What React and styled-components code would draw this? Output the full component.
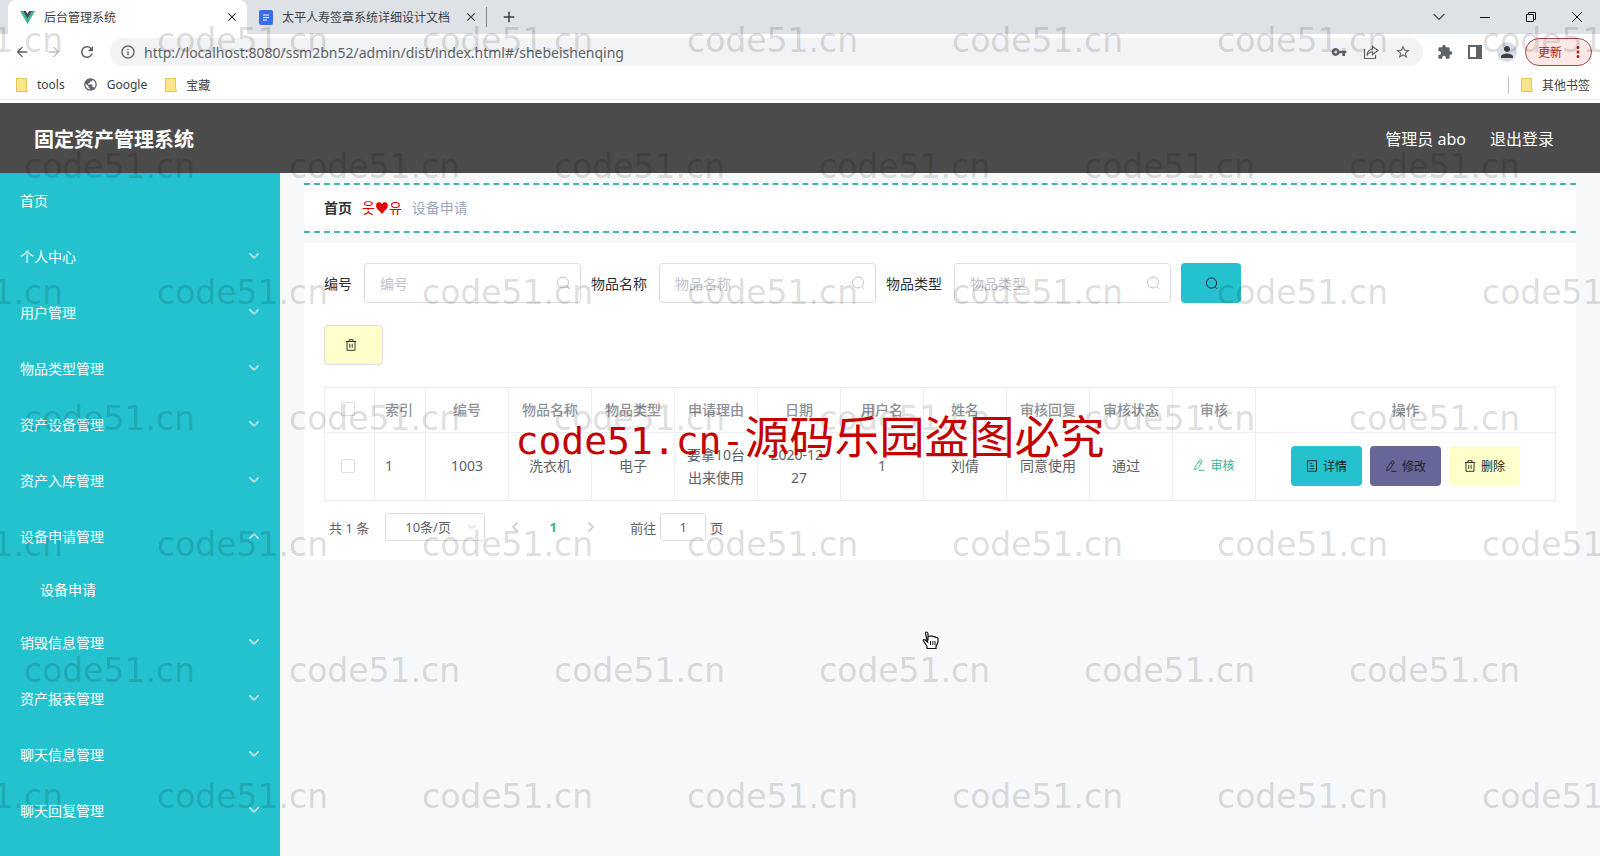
import { useState } from 'react';
import styled, { createGlobalStyle } from 'styled-components'
import { MdVpnKey, MdStarBorder, MdExtension, MdPerson, MdPublic, MdRefresh, MdInfoOutline, MdMoreVert, MdArrowBack, MdArrowForward, MdClose, MdAdd } from 'react-icons/md'

const colors = {
    primary: '#24c2ce',
    dash: '#42b9a8',
    purple: '#666699',
    yellow: '#ffffcc',
    green: '#36b38c',
    header: '#4b4b4b',
    page: '#f6f8fa',
    text: '#606266',
    border: '#dcdfe6',
    tableBorder: '#ebeef5',
    placeholder: '#c0c4cc',
    chrome: '#dee1e6',
}

const GlobalStyle = createGlobalStyle`
    *, *::before, *::after {
        box-sizing: border-box;
    }
    body {
        margin: 0;
        background: ${colors.page};
        color: ${colors.text};
        font-family: "Noto Sans", "Noto Sans CJK SC", sans-serif;
        font-size: 14px;
    }
    button, input, select {
        font-family: inherit;
    }
    button {
        padding: 0;
        border: 0;
        background: none;
        cursor: pointer;
    }
    a {
        color: inherit;
        text-decoration: none;
    }
    svg {
        display: block;
        flex: none;
    }
`

const Page = styled.div`
    position: relative;
    display: flex;
    flex-direction: column;
    min-height: 100vh;
    overflow: hidden;
`

/* browser frame */

const Browser = styled.div`
    background: #fff;
    padding-bottom: 3px;
    color: #3c4043;
    font-size: 12px;
`
const TabStrip = styled.div`
    display: flex;
    align-items: center;
    height: 34px;
    padding-left: 8px;
    background: ${colors.chrome};
`
const Tab = styled.div`
    display: flex;
    align-items: center;
    gap: 9px;
    width: 239px;
    height: 34px;
    padding: 0 8px 0 12px;
    border-radius: 8px 8px 0 0;
    background: ${(props) => (props.$active ? '#fff' : 'transparent')};
`
const TabTitle = styled.span`
    flex: 1;
    overflow: hidden;
    white-space: nowrap;
`
const IconButton = styled.button`
    display: grid;
    place-content: center;
    flex: none;
    color: ${(props) => props.$color || '#3c4043'};
`
const TabDivider = styled.div`
    width: 1px;
    height: 20px;
    margin-right: 13px;
    background: #80868b;
`
const WindowControls = styled.div`
    display: flex;
    gap: 32px;
    margin-left: auto;
    padding-right: 16px;
`
const Toolbar = styled.div`
    display: flex;
    align-items: center;
    gap: 14px;
    height: 34px;
    padding: 2px 8px 0 14px;
`
const NavButtons = styled.div`
    display: flex;
    gap: 16px;
`
const AddressBar = styled.div`
    display: flex;
    align-items: center;
    flex: 1;
    gap: 16px;
    height: 28px;
    padding: 0 12px 0 10px;
    border-radius: 14px;
    background: #f1f3f4;
    color: #5f6368;
`
const AddressLabel = styled.label`
    display: flex;
    align-items: center;
    flex: 1;
    gap: 8px;
`
const AddressInput = styled.input`
    flex: 1;
    padding: 0;
    border: 0;
    outline: 0;
    background: none;
    color: #5f6368;
    font-size: 14px;
`
const ProfileGroup = styled.div`
    display: flex;
    align-items: center;
    gap: 8px;
`
const Avatar = styled(IconButton)`
    width: 20px;
    height: 20px;
    border-radius: 50%;
    background: #d9dce6;
`
const UpdateButton = styled.button`
    display: flex;
    align-items: center;
    justify-content: space-between;
    width: 67px;
    height: 28px;
    padding: 0 4px 0 12px;
    border: 1px solid #a34a45;
    border-radius: 14px;
    background: #fce8e6;
    color: #b3261e;
    font-size: 12px;
`
const Bookmarks = styled.div`
    display: flex;
    align-items: center;
    gap: 18px;
    height: 32px;
    padding: 2px 10px 0 16px;
    border-bottom: 1px solid #eceef0;
`
const Bookmark = styled.a`
    display: flex;
    align-items: center;
    gap: 9px;
`
const OtherBookmarks = styled(Bookmark)`
    margin-left: auto;
    padding-left: 12px;
    border-left: 1px solid #c4c7cb;
`

/* admin page */

const Header = styled.header`
    display: flex;
    justify-content: space-between;
    align-items: center;
    height: 70px;
    padding: 0 46px 0 34px;
    background: ${colors.header};
    color: #fff;
`
const Title = styled.h1`
    margin: 0;
    font-size: 20px;
    font-weight: 700;
`
const UserInfo = styled.div`
    display: flex;
    gap: 24px;
    font-size: 16px;
`
const Body = styled.div`
    display: flex;
    flex: 1;
`
const Sidebar = styled.nav`
    flex: none;
    width: 280px;
    background: ${colors.primary};
    color: #fff;
`
const MenuItem = styled.button`
    display: flex;
    justify-content: space-between;
    align-items: center;
    width: 100%;
    height: ${(props) => (props.$sub ? '50px' : '56px')};
    padding: 0 20px 2px ${(props) => (props.$sub ? '40px' : '20px')};
    color: #fff;
    font-size: 14px;
`
const Main = styled.main`
    flex: 1;
    min-width: 0;
    padding: 10px 24px;
`
const Breadcrumb = styled.div`
    display: flex;
    align-items: center;
    gap: 10px;
    height: 50px;
    padding: 0 20px 2px;
    border-top: 2px dashed ${colors.dash};
    border-bottom: 2px dashed ${colors.dash};
    background: #fff;
    color: #97a8be;
`
const BreadcrumbHome = styled.a`
    color: #303133;
    font-weight: 700;
`
const BreadcrumbSeparator = styled.span`
    color: #e00000;
    font-family: "Noto Sans CJK KR", "DejaVu Sans", sans-serif;
`
const Card = styled.section`
    margin-top: 10px;
    padding: 20px 20px 19px;
    background: #fff;
`
const SearchForm = styled.form`
    display: flex;
    flex-wrap: wrap;
    gap: 10px;
    margin-bottom: 22px;
`
const Field = styled.label`
    display: flex;
    align-items: center;
    gap: 12px;
    color: #303133;
`
const InputBox = styled.span`
    display: flex;
    align-items: center;
    width: 217px;
    height: 40px;
    padding: 0 10px 0 15px;
    border: 1px solid ${colors.border};
    border-radius: 4px;
    color: ${colors.placeholder};
`
const SearchInput = styled.input`
    flex: 1;
    min-width: 0;
    padding: 0;
    border: 0;
    outline: 0;
    background: none;
    color: ${colors.text};
    font-size: 14px;
    &::placeholder {
        color: ${colors.placeholder};
    }
`
const Button = styled.button`
    display: inline-flex;
    align-items: center;
    justify-content: center;
    gap: 5px;
    width: ${(props) => props.$width || '71px'};
    height: 40px;
    border-radius: 4px;
    background: ${(props) => props.$color};
    color: #222;
    font-size: 12px;
`
const DeleteButton = styled(Button)`
    justify-content: flex-start;
    padding-left: 20px;
    border: 1px solid ${colors.border};
`
const Table = styled.table`
    width: 100%;
    margin-top: 22px;
    border: 1px solid ${colors.tableBorder};
    border-collapse: collapse;
    table-layout: fixed;
    th, td {
        padding: 0 10px 2px;
        border: 1px solid ${colors.tableBorder};
        line-height: 23px;
        text-align: center;
    }
    th {
        height: 45px;
        color: #909399;
        font-weight: 500;
    }
    td {
        height: 68px;
    }
    th.check, td.check {
        padding-right: 14px;
    }
    th.index, td.index {
        text-align: left;
    }
`
const Col = styled.col`
    width: ${(props) => props.$width};
`
const Checkbox = styled.input`
    display: block;
    width: 14px;
    height: 14px;
    margin: 0 auto;
    appearance: none;
    border: 1px solid ${colors.border};
    border-radius: 2px;
    background: #fff;
`
const Status = styled.span`
    margin-right: 10px;
`
const AuditButton = styled.button`
    display: inline-flex;
    align-items: center;
    gap: 5px;
    color: ${colors.green};
    font-size: 12px;
`
const Actions = styled.div`
    display: flex;
    justify-content: center;
    gap: 8px;
`
const Pagination = styled.div`
    display: flex;
    align-items: center;
    height: 28px;
    margin-top: 12px;
    padding-left: 5px;
    font-size: 13px;
`
const PageSize = styled.label`
    display: flex;
    align-items: center;
    width: 100px;
    height: 28px;
    margin: 0 24px 0 16px;
    padding: 0 7px 0 19px;
    border: 1px solid ${colors.border};
    border-radius: 3px;
    color: ${colors.placeholder};
`
const PageSelect = styled.select`
    flex: 1;
    padding: 0;
    appearance: none;
    border: 0;
    outline: 0;
    background: none;
    color: ${colors.text};
    font-size: 13px;
`
const Pager = styled.div`
    display: flex;
    align-items: center;
    gap: 26px;
    margin-right: 33px;
`
const PageNumber = styled.button`
    width: 12px;
    color: ${colors.green};
    font-size: 13px;
    font-weight: 700;
`
const Jump = styled.label`
    display: flex;
    align-items: center;
    gap: 4px;
`
const JumpInput = styled.input`
    width: 46px;
    height: 28px;
    padding: 0;
    border: 1px solid ${colors.border};
    border-radius: 3px;
    color: ${colors.text};
    font-size: 13px;
    text-align: center;
`

/* overlays */

const Watermarks = styled.div`
    position: absolute;
    inset: -1px 0 0;
    display: flex;
    flex-direction: column;
    gap: 42px;
    overflow: hidden;
    pointer-events: none;
    color: rgba(0, 0, 0, 0.15);
    font-family: "DejaVu Sans", sans-serif;
    font-size: 33px;
    line-height: 84px;
`
const WatermarkRow = styled.div`
    display: flex;
    flex: none;
    margin-left: ${(props) => (props.$shifted ? '24px' : '-108px')};
`
const Watermark = styled.span`
    flex: none;
    width: 265px;
`
const Notice = styled.div`
    position: absolute;
    top: 402px;
    left: 0;
    right: 0;
    padding-left: 20px;
    pointer-events: none;
    color: #c40000;
    font-family: "Noto Sans CJK SC", sans-serif;
    font-size: 45px;
    font-weight: 400;
    line-height: 66px;
    text-align: center;
    white-space: nowrap;
`
const NoticeSite = styled.span`
    font-family: "DejaVu Sans Mono", monospace;
    font-size: 38px;
`
const HandPointer = styled.svg`
    position: absolute;
    top: 631px;
    left: 922px;
`

const Folder = () => (
    <svg width="12" height="14" viewBox="0 0 12 14">
        <path d="M.5 .5h10v9l1 4H.5z" fill="#fbe58a" stroke="#e8c64e" />
    </svg>
)

const Chevron = ({ up, size = 12, rotate = 0, color = 'currentColor', width = 1.1 }) => (
    <svg width={size} height={size} viewBox="0 0 12 12" fill="none" stroke={color} strokeWidth={width} transform={`rotate(${up ? 180 : rotate})`}>
        <path d="M1.500 3.500 6 8l4.500-4.500" />
    </svg>
)

const SearchIcon = ({ size = 14 }) => (
    <svg width={size} height={size} viewBox="0 0 14 14" fill="none" stroke="currentColor">
        <circle cx="7" cy="6.500" r="5.500" />
        <path d="M10.800 10.500 13 12.800" />
    </svg>
)

const TrashIcon = () => (
    <svg width="12" height="12" viewBox="0 0 12 12" fill="none" stroke="currentColor" strokeWidth=".9">
        <path d="M.8 2.500h10.400M4 2.500V.7h4v1.800M2 2.500v8.800h8V2.500M4.800 4.800v4M7.200 4.800v4" />
    </svg>
)

const EditIcon = () => (
    <svg width="12" height="12" viewBox="0 0 12 12" fill="none" stroke="currentColor" strokeWidth=".9">
        <path d="M2 8 6.500 1.300Q7.300.6 8.300 1.200T9 2.900L4.600 9.600 1.700 11zM5.600 2.800l2.300 1.500M6 11.300h5.500" />
    </svg>
)

const DetailIcon = () => (
    <svg width="12" height="12" viewBox="0 0 12 12" fill="none" stroke="currentColor" strokeWidth=".9">
        <path d="M1.500.7h9v10.600h-9zM3.800 3.300h2.400M3.800 6h4.400M3.800 8.700h4.400" />
    </svg>
)

const VueLogo = () => (
    <svg width="15" height="13" viewBox="0 0 15 13">
        <path d="M0 0h3l4.500 7.800L12 0h3L7.500 13z" fill="#41b883" />
        <path d="M3 0h2.800l1.700 3 1.700-3H12L7.500 7.800z" fill="#35495e" />
    </svg>
)

const DocLogo = () => (
    <svg width="14" height="15" viewBox="0 0 14 15">
        <rect width="14" height="15" rx="2" fill="#3a6ee8" />
        <path d="M4 5h6M4 7.500h6M4 10h4" stroke="#fff" strokeWidth="1.200" />
    </svg>
)

const ShareIcon = () => (
    <svg width="16" height="16" viewBox="0 0 16 16" fill="none" stroke="currentColor" strokeWidth="1.200">
        <path d="M1.500 5v9.500h11V11" />
        <path d="M9.500 2.500 15 6.500l-5.500 4V8Q6 8 4 11.500 4.500 5.500 9.500 5z" />
    </svg>
)

const SidePanelIcon = () => (
    <svg width="16" height="16" viewBox="0 0 16 16">
        <path d="M1 1h14v14H1zM3 3v10h6V3z" fill="#5f6368" fillRule="evenodd" />
    </svg>
)

const menus = [
    { name: '首页', leaf: true },
    { name: '个人中心' },
    { name: '用户管理' },
    { name: '物品类型管理' },
    { name: '资产设备管理' },
    { name: '资产入库管理' },
    { name: '设备申请管理', children: ['设备申请'] },
    { name: '销毁信息管理' },
    { name: '资产报表管理' },
    { name: '聊天信息管理' },
    { name: '聊天回复管理' },
]

const searchFields = ['编号', '物品名称', '物品类型']

const columns = ['编号', '物品名称', '物品类型', '申请理由', '日期', '用户名', '姓名', '审核回复', '审核状态', '审核']

const rows = [
    { id: '1003', name: '洗衣机', type: '电子', reason: '要拿10台出来使用', date: '2020-12-27', user: '1', realName: '刘倩', reply: '同意使用', status: '通过' },
]

const BrowserFrame = () => (
    <Browser>
        <TabStrip>
            <Tab $active>
                <VueLogo />
                <TabTitle>后台管理系统</TabTitle>
                <IconButton aria-label="关闭标签页"><MdClose size={14} /></IconButton>
            </Tab>
            <Tab>
                <DocLogo />
                <TabTitle>太平人寿签章系统详细设计文档</TabTitle>
                <IconButton aria-label="关闭标签页"><MdClose size={14} /></IconButton>
            </Tab>
            <TabDivider />
            <IconButton aria-label="新标签页"><MdAdd size={18} /></IconButton>
            <WindowControls>
                <IconButton aria-label="搜索标签页"><Chevron size={14} /></IconButton>
                <IconButton aria-label="最小化">
                    <svg width="14" height="14" viewBox="0 0 14 14" stroke="#111"><path d="M2 7.500h10" /></svg>
                </IconButton>
                <IconButton aria-label="还原">
                    <svg width="14" height="14" viewBox="0 0 14 14" fill="none" stroke="#111"><path d="M2.500 4.500h7v7h-7zM4.500 4.500v-2h7v7h-2" /></svg>
                </IconButton>
                <IconButton aria-label="关闭">
                    <svg width="14" height="14" viewBox="0 0 14 14" stroke="#111"><path d="m2 2 10 10M12 2 2 12" /></svg>
                </IconButton>
            </WindowControls>
        </TabStrip>
        <Toolbar>
            <NavButtons>
                <IconButton $color="#5f6368" aria-label="后退"><MdArrowBack size={16} /></IconButton>
                <IconButton $color="#b8bbbf" aria-label="前进"><MdArrowForward size={16} /></IconButton>
                <IconButton $color="#5f6368" aria-label="刷新"><MdRefresh size={18} /></IconButton>
            </NavButtons>
            <AddressBar>
                <AddressLabel>
                    <MdInfoOutline size={16} />
                    <AddressInput aria-label="地址" defaultValue="http://localhost:8080/ssm2bn52/admin/dist/index.html#/shebeishenqing" />
                </AddressLabel>
                <MdVpnKey size={16} />
                <ShareIcon />
                <MdStarBorder size={16} />
            </AddressBar>
            <IconButton $color="#5f6368" aria-label="扩展程序"><MdExtension size={16} /></IconButton>
            <IconButton aria-label="侧边栏"><SidePanelIcon /></IconButton>
            <ProfileGroup>
                <Avatar aria-label="用户"><MdPerson size={18} /></Avatar>
                <UpdateButton>更新<MdMoreVert size={18} /></UpdateButton>
            </ProfileGroup>
        </Toolbar>
        <Bookmarks>
            <Bookmark href="#"><Folder />tools</Bookmark>
            <Bookmark href="#"><MdPublic size={15} color="#5f6368" />Google</Bookmark>
            <Bookmark href="#"><Folder />宝藏</Bookmark>
            <OtherBookmarks href="#"><Folder />其他书签</OtherBookmarks>
        </Bookmarks>
    </Browser>
)

const App = () => {
    const [opened, setOpened] = useState('设备申请管理')

    return (
        <Page>
            <GlobalStyle />
            <BrowserFrame />
            <Header>
                <Title>固定资产管理系统</Title>
                <UserInfo>
                    <span>管理员 abo</span>
                    <a href="#">退出登录</a>
                </UserInfo>
            </Header>
            <Body>
                <Sidebar>
                    {menus.map((menu) => (
                        <div key={menu.name}>
                            <MenuItem onClick={() => setOpened(opened === menu.name ? '' : menu.name)}>
                                {menu.name}
                                {!menu.leaf && <Chevron up={opened === menu.name} />}
                            </MenuItem>
                            {opened === menu.name && menu.children && menu.children.map((child) => (
                                <MenuItem $sub key={child}>{child}</MenuItem>
                            ))}
                        </div>
                    ))}
                </Sidebar>
                <Main>
                    <Breadcrumb>
                        <BreadcrumbHome href="#">首页</BreadcrumbHome>
                        <BreadcrumbSeparator>웃♥유</BreadcrumbSeparator>
                        <span>设备申请</span>
                    </Breadcrumb>
                    <Card>
                        <SearchForm onSubmit={(e) => e.preventDefault()}>
                            {searchFields.map((field) => (
                                <Field key={field}>
                                    {field}
                                    <InputBox>
                                        <SearchInput placeholder={field} />
                                        <SearchIcon />
                                    </InputBox>
                                </Field>
                            ))}
                            <Button $color={colors.primary} $width="60px" aria-label="查询">
                                <SearchIcon size={13} />
                            </Button>
                        </SearchForm>
                        <DeleteButton $color={colors.yellow} $width="59px" aria-label="删除">
                            <TrashIcon />
                        </DeleteButton>
                        <Table>
                            <colgroup>
                                <Col $width="50px" />
                                <Col $width="51px" />
                                {columns.map((column) => <Col key={column} $width="83px" />)}
                                <Col />
                            </colgroup>
                            <thead>
                                <tr>
                                    <th className="check"><Checkbox type="checkbox" aria-label="全选" /></th>
                                    <th className="index">索引</th>
                                    {columns.map((column) => <th key={column}>{column}</th>)}
                                    <th>操作</th>
                                </tr>
                            </thead>
                            <tbody>
                                {rows.map((row, index) => (
                                    <tr key={row.id}>
                                        <td className="check"><Checkbox type="checkbox" aria-label="选择" /></td>
                                        <td className="index">{index + 1}</td>
                                        <td>{row.id}</td>
                                        <td>{row.name}</td>
                                        <td>{row.type}</td>
                                        <td>{row.reason}</td>
                                        <td>{row.date}</td>
                                        <td>{row.user}</td>
                                        <td>{row.realName}</td>
                                        <td>{row.reply}</td>
                                        <td><Status>{row.status}</Status></td>
                                        <td><AuditButton><EditIcon />审核</AuditButton></td>
                                        <td>
                                            <Actions>
                                                <Button $color={colors.primary}><DetailIcon />详情</Button>
                                                <Button $color={colors.purple}><EditIcon />修改</Button>
                                                <Button $color={colors.yellow}><TrashIcon />删除</Button>
                                            </Actions>
                                        </td>
                                    </tr>
                                ))}
                            </tbody>
                        </Table>
                        <Pagination>
                            <span>共 1 条</span>
                            <PageSize>
                                <PageSelect aria-label="每页条数">
                                    <option>10条/页</option>
                                </PageSelect>
                                <Chevron size={10} />
                            </PageSize>
                            <Pager>
                                <IconButton $color={colors.placeholder} aria-label="上一页"><Chevron rotate={90} width={1.4} /></IconButton>
                                <PageNumber>1</PageNumber>
                                <IconButton $color={colors.placeholder} aria-label="下一页"><Chevron rotate={-90} width={1.4} /></IconButton>
                            </Pager>
                            <Jump>
                                前往
                                <JumpInput defaultValue="1" />
                                页
                            </Jump>
                        </Pagination>
                    </Card>
                </Main>
            </Body>
            <Watermarks aria-hidden="true">
                {[0, 1, 2, 3, 4, 5, 6].map((row) => (
                    <WatermarkRow key={row} $shifted={row % 2 === 1}>
                        {[0, 1, 2, 3, 4, 5, 6].map((col) => <Watermark key={col}>code51.cn</Watermark>)}
                    </WatermarkRow>
                ))}
            </Watermarks>
            <Notice><NoticeSite>code51.cn-</NoticeSite>源码乐园盗图必究</Notice>
            <HandPointer width="18" height="20" viewBox="0 0 18 20" fill="#fff" stroke="#111" strokeWidth="1.200">
                <path d="M6 9.500V2.500Q5.500 1 4.500 1T3.500 2.500L5.500 11 3 8.800Q1.500 8 1.200 9.300L5 15.500V17.500h9v-2L16 11V7.500Q15.500 6 14 6.500 13 5 11.200 5.800 10 4.500 8.500 5.200L6 5.500" />
                <path d="M8.500 10v4M10.800 10v4M13 10v4" strokeWidth="1" />
            </HandPointer>
        </Page>
    )
}

export default App
